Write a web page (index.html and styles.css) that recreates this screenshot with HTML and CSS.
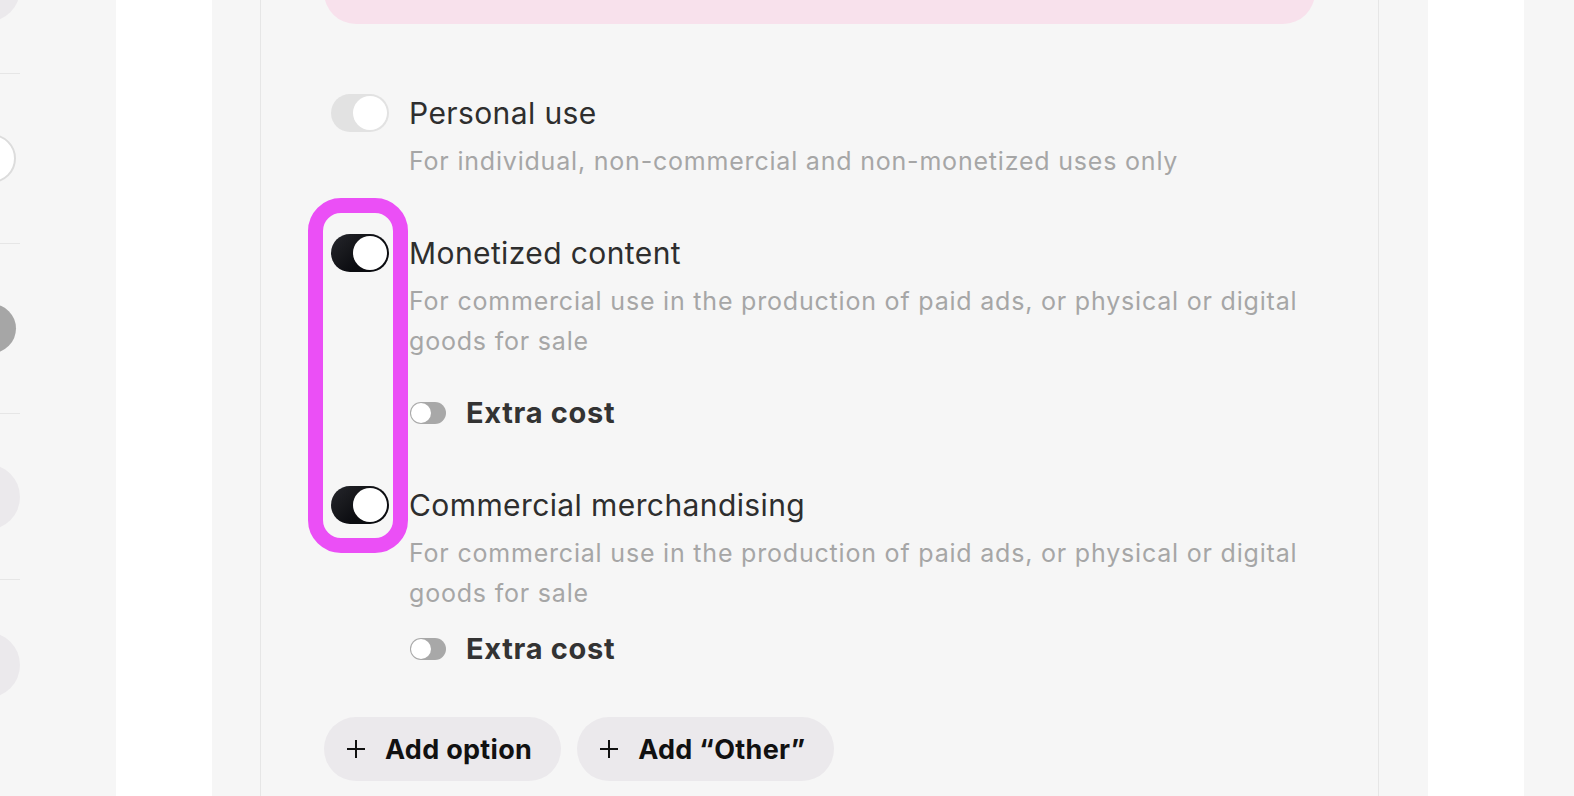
FILE: index.html
```html
<!DOCTYPE html>
<html lang="en">
<head>
<meta charset="utf-8">
<title>Usage options</title>
<link rel="stylesheet" href="styles.css">
</head>
<body>
<div class="page">
  <aside class="side-list">
    <div class="side-inner">
      <div class="side-item"><span class="shape pill"></span></div>
      <div class="side-sep"></div>
      <div class="side-item"><span class="shape knob-white"></span></div>
      <div class="side-sep"></div>
      <div class="side-item"><span class="shape knob-gray"></span></div>
      <div class="side-sep"></div>
      <div class="side-item short"><span class="shape pill"></span></div>
      <div class="side-sep"></div>
      <div class="side-item"><span class="shape pill"></span></div>
    </div>
  </aside>
  <div class="strip white"></div>
  <div class="strip gray-l"></div>

  <main class="card">
    <div class="notice"></div>

    <div class="options">
      <div class="option">
        <div class="option-row">
          <span class="toggle on disabled"><span class="knob"></span></span>
          <span class="option-title">Personal use</span>
        </div>
        <p class="option-desc">For individual, non-commercial and non-monetized uses only</p>
      </div>

      <div class="option">
        <div class="option-row">
          <span class="toggle on"><span class="knob"></span></span>
          <span class="option-title">Monetized content</span>
        </div>
        <p class="option-desc">For commercial use in the production of paid ads, or physical or digital goods for sale</p>
        <div class="extra extra-wide">
          <span class="mini-toggle"><span class="mini-knob"></span></span>
          <span class="extra-label">Extra cost</span>
        </div>
      </div>

      <div class="option">
        <div class="option-row">
          <span class="toggle on"><span class="knob"></span></span>
          <span class="option-title">Commercial merchandising</span>
        </div>
        <p class="option-desc">For commercial use in the production of paid ads, or physical or digital goods for sale</p>
        <div class="extra">
          <span class="mini-toggle"><span class="mini-knob"></span></span>
          <span class="extra-label">Extra cost</span>
        </div>
      </div>

      <div class="highlight"></div>
    </div>

    <div class="actions">
      <button class="add-btn" type="button">
        <svg class="plus" viewBox="0 0 20 20" width="20" height="20" aria-hidden="true"><path d="M10 1v18M1 10h18" stroke="#111" stroke-width="2" fill="none"/></svg>
        <span>Add option</span>
      </button>
      <button class="add-btn" type="button">
        <svg class="plus" viewBox="0 0 20 20" width="20" height="20" aria-hidden="true"><path d="M10 1v18M1 10h18" stroke="#111" stroke-width="2" fill="none"/></svg>
        <span>Add “Other”</span>
      </button>
    </div>
  </main>

  <div class="strip gray-r"></div>
  <div class="strip white"></div>
  <div class="strip gray-end"></div>
</div>
</body>
</html>
```

FILE: styles.css
```css
* { box-sizing: border-box; }

html, body {
  margin: 0;
  padding: 0;
  height: 100%;
  background: #f6f6f6;
  font-family: "Inter", "Liberation Sans", sans-serif;
  overflow: hidden;
}

.page {
  display: flex;
  height: 796px;
  overflow: hidden;
}

/* left clipped list */
.side-list {
  width: 116px;
  flex: none;
  background: #f6f6f6;
  overflow: hidden;
}
.side-inner {
  width: 20px;
  margin-top: -96px;
  display: flex;
  flex-direction: column;
}
.side-item {
  height: 169px;
  display: flex;
  align-items: center;
  justify-content: flex-end;
}
.side-item.short { height: 165px; }
.side-sep {
  height: 1px;
  background: #e6e6e6;
}
.shape { flex: none; display: block; }
.pill {
  width: 200px;
  height: 66px;
  border-radius: 33px;
  background: #ebe9ec;
}
.knob-white {
  width: 49px;
  height: 49px;
  border-radius: 50%;
  background: #fff;
  border: 2px solid #dcdcdc;
  margin-right: 4px;
}
.knob-gray {
  width: 49px;
  height: 49px;
  border-radius: 50%;
  background: #a6a6a6;
  margin-right: 4px;
}

.strip { flex: none; }
.strip.white { width: 96px; background: #fff; }
.strip.gray-l { width: 48px; background: #f6f6f6; }
.strip.gray-r { width: 49px; background: #f6f6f6; }
.strip.gray-end { flex: 1; background: #f6f6f6; }

/* main card */
.card {
  width: 1119px;
  flex: none;
  background: #f6f6f6;
  border-left: 1px solid #e6e6e6;
  border-right: 1px solid #e6e6e6;
  padding: 0 63px;
}

.notice {
  height: 140px;
  margin-top: -116px;
  background: #f8e1ec;
  border-radius: 32px;
}

.options {
  position: relative;
  margin-top: 69px;
  padding-left: 7px;
  display: flex;
  flex-direction: column;
  gap: 52px;
}

.option-row {
  display: flex;
  align-items: center;
  gap: 20px;
  height: 40px;
}

.toggle {
  position: relative;
  width: 58px;
  height: 38px;
  border-radius: 19px;
  flex: none;
  background: linear-gradient(135deg, #26272c 0%, #0b0c10 60%);
}
.toggle.disabled { background: #e2e2e2; }
.toggle .knob {
  position: absolute;
  top: 2px;
  right: 2px;
  width: 34px;
  height: 34px;
  border-radius: 50%;
  background: #fff;
}

.option-title {
  font-size: 30px;
  line-height: 40px;
  color: #2e2e2e;
  letter-spacing: 0.4px;
}

.option-desc {
  margin: 8px 0 0;
  padding-left: 78px;
  font-size: 25px;
  line-height: 40px;
  color: #a6a6a6;
  letter-spacing: 0.8px;
}

.extra {
  display: flex;
  align-items: center;
  gap: 20px;
  height: 40px;
  margin-top: 16px;
  padding-left: 79px;
}
.extra.extra-wide { margin-top: 32px; }

.mini-toggle {
  position: relative;
  width: 36px;
  height: 22px;
  border-radius: 11px;
  background: #a8a8a8;
  flex: none;
}
.mini-knob {
  position: absolute;
  top: 1px;
  left: 1px;
  width: 20px;
  height: 20px;
  border-radius: 50%;
  background: #fff;
}

.extra-label {
  font-size: 29px;
  font-weight: 700;
  color: #333;
  line-height: 40px;
  letter-spacing: 0.7px;
}

.highlight {
  position: absolute;
  left: -16px;
  top: 105px;
  width: 100px;
  height: 355px;
  border: 15px solid #eb4ff6;
  border-radius: 33px;
  pointer-events: none;
}

.actions {
  display: flex;
  gap: 16px;
  margin-top: 48px;
}

.add-btn {
  display: flex;
  align-items: center;
  gap: 19px;
  height: 64px;
  padding: 0 29px 0 22px;
  border: none;
  border-radius: 32px;
  background: #ebe9ec;
  font-family: inherit;
  font-size: 27px;
  font-weight: 700;
  color: #111;
  letter-spacing: 0.3px;
}
.plus { flex: none; display: block; }
```
